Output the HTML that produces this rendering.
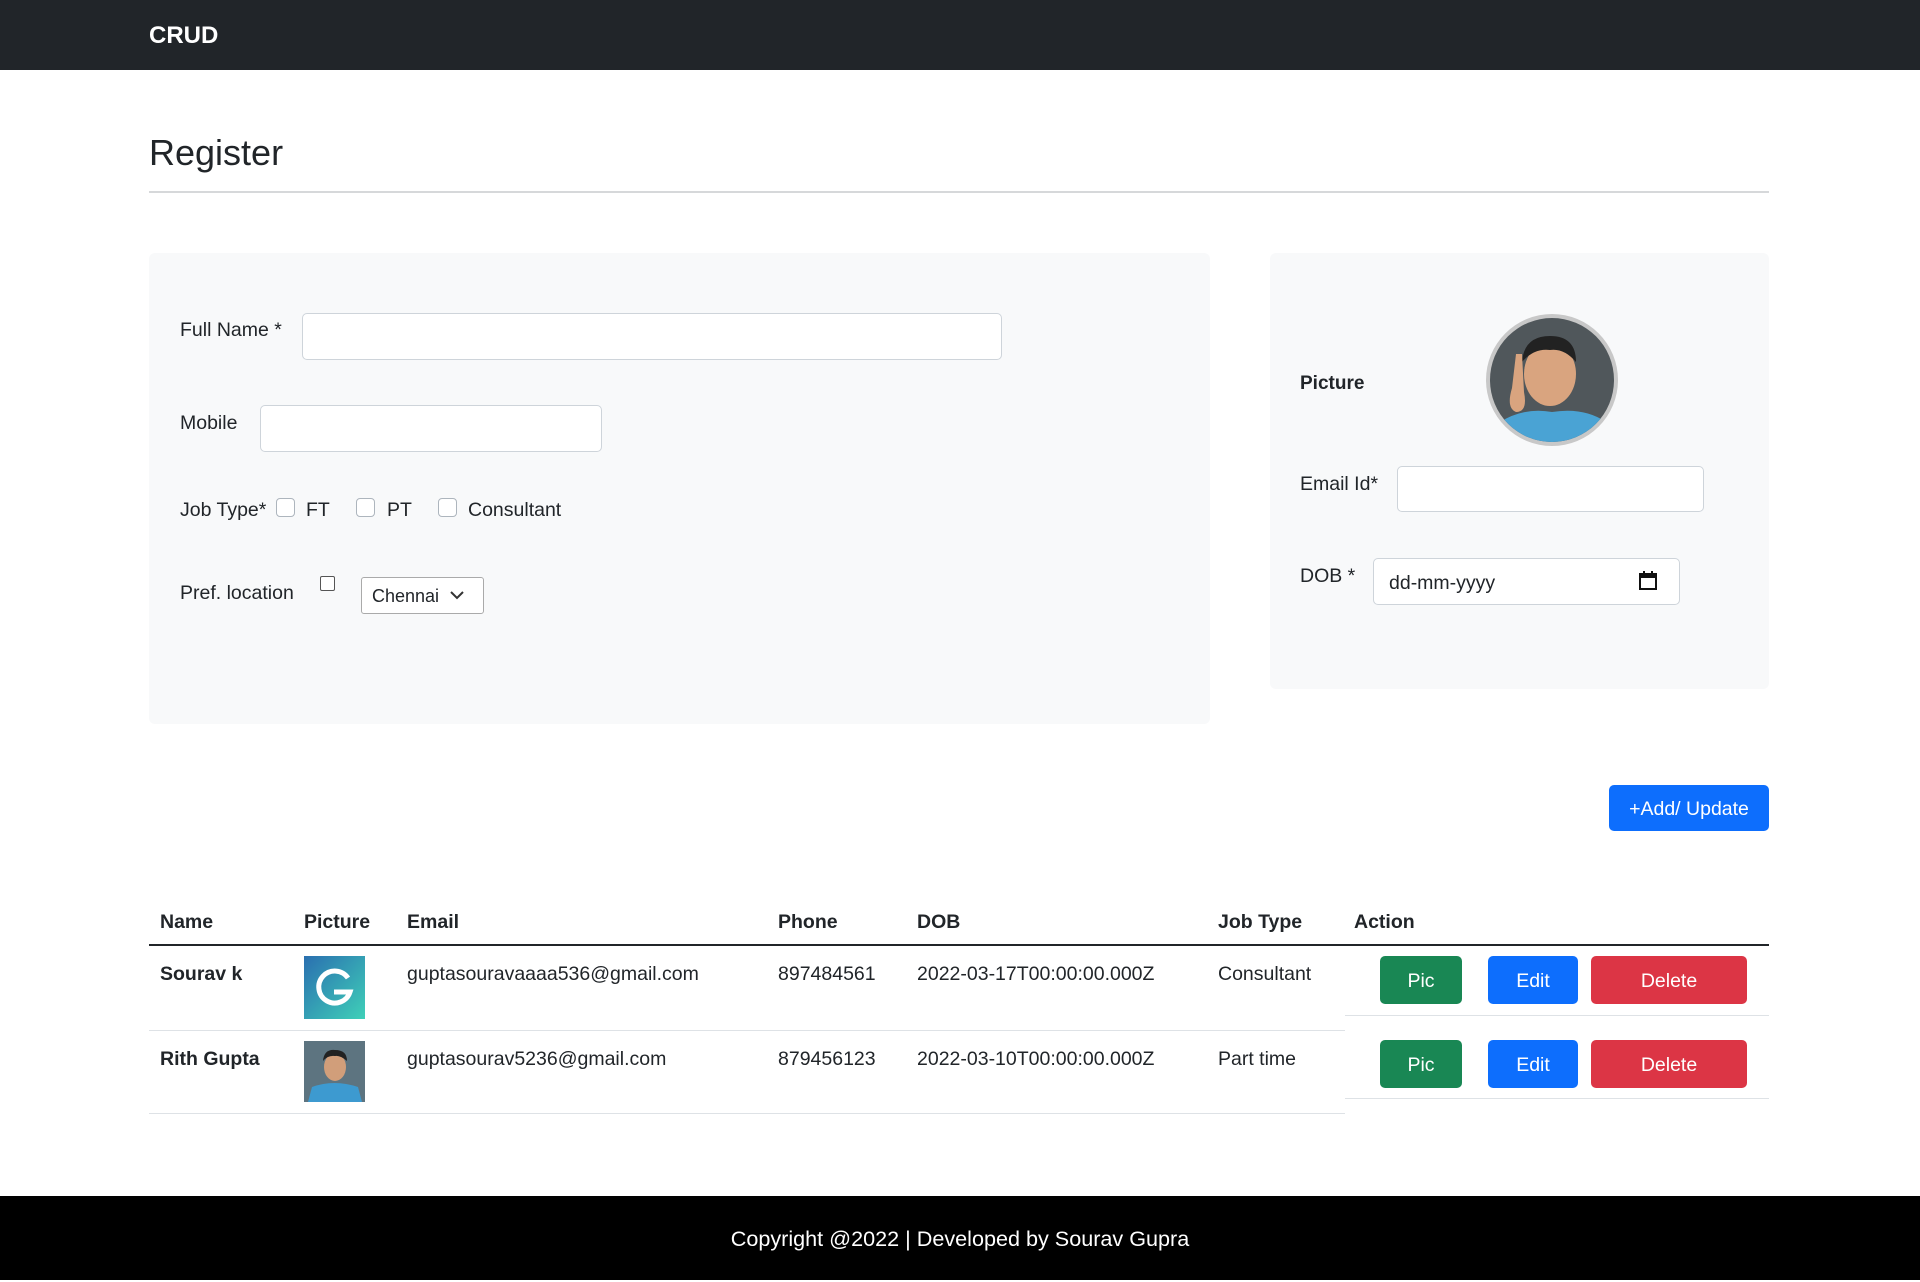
<!DOCTYPE html>
<html><head><meta charset="utf-8"><style>
*{box-sizing:border-box;margin:0;padding:0}
body{width:1920px;height:1280px;position:relative;font-family:"Segoe UI","Liberation Sans",sans-serif;font-size:19.5px;color:#212529;background:#fff;overflow:hidden}
.a{position:absolute}
.inp{position:absolute;background:#fff;border:1px solid #ced4da;border-radius:5px}
.cb{position:absolute;width:19px;height:19px;border:1px solid #adb5bd;border-radius:4px;background:#fff}
.btn{position:absolute;color:#fff;border-radius:5px;text-align:center;font-size:19.5px}
.lbl{position:absolute;line-height:24px}
.t{position:absolute;line-height:24px;margin-top:2px}
</style></head><body>
<div class="a" style="left:0;top:0;width:1920px;height:70px;background:#212529"></div>
<div class="a" style="left:149px;top:21px;color:#fff;font-weight:bold;font-size:24px;line-height:30px">CRUD</div>
<div class="a" style="left:149px;top:131px;font-size:36px;line-height:44px;font-weight:normal;font-family:'Liberation Sans',sans-serif">Register</div>
<div class="a" style="left:149px;top:191px;width:1620px;height:2px;background:#d6d8da"></div>

<div class="a" style="left:149px;top:253px;width:1061px;height:471px;background:#f8f9fa;border-radius:6px"></div>
<div class="a" style="left:1270px;top:253px;width:499px;height:436px;background:#f8f9fa;border-radius:6px"></div>

<div class="t" style="left:180px;top:316px">Full Name *</div>
<div class="inp" style="left:302px;top:313px;width:700px;height:47px"></div>
<div class="t" style="left:180px;top:409px">Mobile</div>
<div class="inp" style="left:260px;top:405px;width:342px;height:47px"></div>
<div class="t" style="left:180px;top:496px">Job Type*</div>
<div class="cb" style="left:276px;top:498px"></div><div class="t" style="left:306px;top:496px">FT</div>
<div class="cb" style="left:356px;top:498px"></div><div class="t" style="left:387px;top:496px">PT</div>
<div class="cb" style="left:438px;top:498px"></div><div class="t" style="left:468px;top:496px">Consultant</div>
<div class="t" style="left:180px;top:579px">Pref. location</div>
<div class="a" style="left:320px;top:576px;width:15px;height:15px;border:1.5px solid #555;border-radius:2px;background:#fff"></div>
<div class="inp" style="left:361px;top:577px;width:123px;height:37px;border-color:#aaa;border-radius:3px;font-size:18px;padding:6px 10px;line-height:24px">Chennai
<svg class="a" style="left:88px;top:12px" width="14" height="10" viewBox="0 0 14 10"><path d="M1 2 L7 8 L13 2" fill="none" stroke="#333" stroke-width="2"/></svg></div>

<div class="t" style="left:1300px;top:370px;font-weight:600;font-size:19px">Picture</div>
<svg class="a" style="left:1484px;top:312px" width="136" height="136" viewBox="0 0 136 136">
<defs><clipPath id="c"><circle cx="68" cy="68" r="62"/></clipPath></defs>
<circle cx="68" cy="68" r="66" fill="#c8c8c8"/>
<g clip-path="url(#c)"><rect width="136" height="136" fill="#50575b"/>
<path d="M10 136 L16 110 Q40 95 68 100 Q100 95 122 110 L130 136Z" fill="#4aa3d4"/>
<ellipse cx="66" cy="62" rx="26" ry="32" fill="#d9a47f"/>
<path d="M38 50 Q40 24 66 24 Q92 24 92 50 Q80 36 66 38 Q50 36 38 50Z" fill="#222"/>
<path d="M28 76 L32 42 L38 42 L40 80 Q44 100 32 100 Q22 96 28 76Z" fill="#d9a47f"/></g></svg>
<div class="t" style="left:1300px;top:470px">Email Id*</div>
<div class="inp" style="left:1397px;top:466px;width:307px;height:46px"></div>
<div class="t" style="left:1300px;top:562px">DOB *</div>
<div class="inp" style="left:1373px;top:558px;width:307px;height:47px;padding:12px 15px;line-height:24px">dd-mm-yyyy
<svg class="a" style="left:264px;top:12px" width="20" height="20" viewBox="0 0 20 20"><rect x="2" y="3" width="16" height="15" fill="none" stroke="#111" stroke-width="2"/><rect x="2" y="3" width="16" height="4" fill="#111"/><rect x="5" y="0" width="2" height="4" fill="#111"/><rect x="13" y="0" width="2" height="4" fill="#111"/></svg></div>

<div class="btn" style="left:1609px;top:785px;width:160px;height:46px;background:#0d6efd;line-height:48px">+Add/ Update</div>

<div class="t" style="top:908px;left:160px;font-weight:bold">Name</div>
<div class="t" style="top:908px;left:304px;font-weight:bold">Picture</div>
<div class="t" style="top:908px;left:407px;font-weight:bold">Email</div>
<div class="t" style="top:908px;left:778px;font-weight:bold">Phone</div>
<div class="t" style="top:908px;left:917px;font-weight:bold">DOB</div>
<div class="t" style="top:908px;left:1218px;font-weight:bold">Job Type</div>
<div class="t" style="top:908px;left:1354px;font-weight:bold">Action</div>
<div class="a" style="left:149px;top:944px;width:1620px;height:2px;background:#212529"></div>

<div class="t" style="top:960px;left:160px;font-weight:bold">Sourav k</div>
<svg class="a" style="left:304px;top:956px" width="61" height="63" viewBox="0 0 61 63"><defs><linearGradient id="g" x1="0" y1="0" x2="1" y2="1"><stop offset="0" stop-color="#2a6fb0"/><stop offset="1" stop-color="#3fd0b8"/></linearGradient></defs><rect width="61" height="63" fill="url(#g)"/><path d="M44 22 A16 16 0 1 0 46 36 L30 36" fill="none" stroke="#fff" stroke-width="5"/></svg>
<div class="t" style="top:960px;left:407px">guptasouravaaaa536@gmail.com</div>
<div class="t" style="top:960px;left:778px">897484561</div>
<div class="t" style="top:960px;left:917px">2022-03-17T00:00:00.000Z</div>
<div class="t" style="top:960px;left:1218px">Consultant</div>
<div class="btn" style="left:1380px;top:956px;width:82px;height:48px;line-height:50px;background:#198754">Pic</div>
<div class="btn" style="left:1488px;top:956px;width:90px;height:48px;line-height:50px;background:#0d6efd">Edit</div>
<div class="btn" style="left:1591px;top:956px;width:156px;height:48px;line-height:50px;background:#dc3545">Delete</div>
<div class="a" style="left:1345px;top:1015px;width:424px;height:1px;background:#dee2e6"></div>
<div class="a" style="left:149px;top:1030px;width:1196px;height:1px;background:#dee2e6"></div>

<div class="t" style="top:1045px;left:160px;font-weight:bold">Rith Gupta</div>
<svg class="a" style="left:304px;top:1041px" width="61" height="61" viewBox="0 0 61 61"><rect width="61" height="61" fill="#5d7480"/><path d="M4 61 L8 46 Q30 38 54 46 L58 61Z" fill="#3d9ad0"/><ellipse cx="31" cy="26" rx="11" ry="14" fill="#d19e7a"/><path d="M19 20 Q20 8 31 9 Q43 9 43 20 Q36 14 31 15 Q24 14 19 20Z" fill="#222"/></svg>
<div class="t" style="top:1045px;left:407px">guptasourav5236@gmail.com</div>
<div class="t" style="top:1045px;left:778px">879456123</div>
<div class="t" style="top:1045px;left:917px">2022-03-10T00:00:00.000Z</div>
<div class="t" style="top:1045px;left:1218px">Part time</div>
<div class="btn" style="left:1380px;top:1040px;width:82px;height:48px;line-height:50px;background:#198754">Pic</div>
<div class="btn" style="left:1488px;top:1040px;width:90px;height:48px;line-height:50px;background:#0d6efd">Edit</div>
<div class="btn" style="left:1591px;top:1040px;width:156px;height:48px;line-height:50px;background:#dc3545">Delete</div>
<div class="a" style="left:1345px;top:1098px;width:424px;height:1px;background:#dee2e6"></div>
<div class="a" style="left:149px;top:1113px;width:1196px;height:1px;background:#dee2e6"></div>

<div class="a" style="left:0;top:1196px;width:1920px;height:84px;background:#000;color:#fff;text-align:center;line-height:86px;font-size:21.6px">Copyright @2022 | Developed by Sourav Gupra</div>
</body></html>
